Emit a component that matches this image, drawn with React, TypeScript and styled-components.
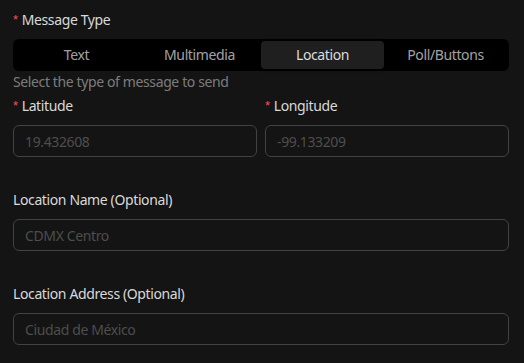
import React, { useState } from "react";
import styled, { createGlobalStyle } from "styled-components";

const GlobalStyle = createGlobalStyle`
  html, body {
    margin: 0;
    padding: 0;
    background: #141414;
  }
  body {
    font-family: "Segoe UI", "Noto Sans", "Open Sans", sans-serif;
    letter-spacing: -0.38px;
  }
`;

const Page = styled.div`
  width: 524px;
  height: 363px;
  box-sizing: border-box;
  padding: 9px 15px 0 13px;
  background: #141414;
  display: flex;
  flex-direction: column;
`;

const FormItem = styled.div<{ $gap?: number }>`
  display: flex;
  flex-direction: column;
  margin-bottom: ${(p) => p.$gap ?? 0}px;
  min-width: 0;
`;

const Label = styled.label`
  font-size: 14px;
  line-height: 22px;
  padding-bottom: 8px;
  color: rgba(255, 255, 255, 0.85);
  display: flex;
  align-items: center;
`;

const Required = styled.span`
  color: #ff4d4f;
  font-family: "Liberation Sans", sans-serif;
  font-size: 13px;
  margin-right: 4px;
  line-height: 1;
  position: relative;
  top: -1px;
`;

const Segmented = styled.div`
  display: flex;
  height: 32px;
  box-sizing: border-box;
  padding: 2px;
  background: #000000;
  border-radius: 6px;
`;

const SegmentItem = styled.button<{ $active?: boolean }>`
  flex: 1;
  border: none;
  border-radius: 4px;
  font-family: inherit;
  letter-spacing: inherit;
  font-size: 14px;
  line-height: 28px;
  padding: 0 11px;
  cursor: pointer;
  background: ${(p) => (p.$active ? "#1f1f1f" : "transparent")};
  color: ${(p) => (p.$active ? "rgba(255,255,255,0.85)" : "rgba(255,255,255,0.65)")};
  box-shadow: ${(p) =>
    p.$active ? "0 1px 2px rgba(0,0,0,0.3), 0 1px 4px rgba(0,0,0,0.2)" : "none"};
`;

const Help = styled.div`
  font-size: 14px;
  line-height: 22px;
  color: rgba(255, 255, 255, 0.45);
  margin-bottom: 2px;
`;

const Row = styled.div`
  display: grid;
  grid-template-columns: 1fr 1fr;
  gap: 8px;
  margin-bottom: 32px;
`;

const Input = styled.input`
  height: 32px;
  box-sizing: border-box;
  width: 100%;
  padding: 4px 11px;
  font-family: inherit;
  letter-spacing: inherit;
  font-size: 14px;
  color: rgba(255, 255, 255, 0.85);
  background: #141414;
  border: 1px solid #424242;
  border-radius: 6px;
  outline: none;
  &::placeholder {
    color: rgba(255, 255, 255, 0.25);
  }
`;

const tabs = ["Text", "Multimedia", "Location", "Poll/Buttons"];

export default function App() {
  const [tab, setTab] = useState("Location");
  return (
    <>
      <GlobalStyle />
      <Page>
        <FormItem>
          <Label>
            <Required>*</Required>Message Type
          </Label>
          <Segmented>
            {tabs.map((t) => (
              <SegmentItem key={t} $active={t === tab} onClick={() => setTab(t)}>
                {t}
              </SegmentItem>
            ))}
          </Segmented>
          <Help>Select the type of message to send</Help>
        </FormItem>
        <Row>
          <FormItem>
            <Label>
              <Required>*</Required>Latitude
            </Label>
            <Input placeholder="19.432608" />
          </FormItem>
          <FormItem>
            <Label>
              <Required>*</Required>Longitude
            </Label>
            <Input placeholder="-99.133209" />
          </FormItem>
        </Row>
        <FormItem $gap={32}>
          <Label>Location Name (Optional)</Label>
          <Input placeholder="CDMX Centro" />
        </FormItem>
        <FormItem>
          <Label>Location Address (Optional)</Label>
          <Input placeholder="Ciudad de México" />
        </FormItem>
      </Page>
    </>
  );
}
